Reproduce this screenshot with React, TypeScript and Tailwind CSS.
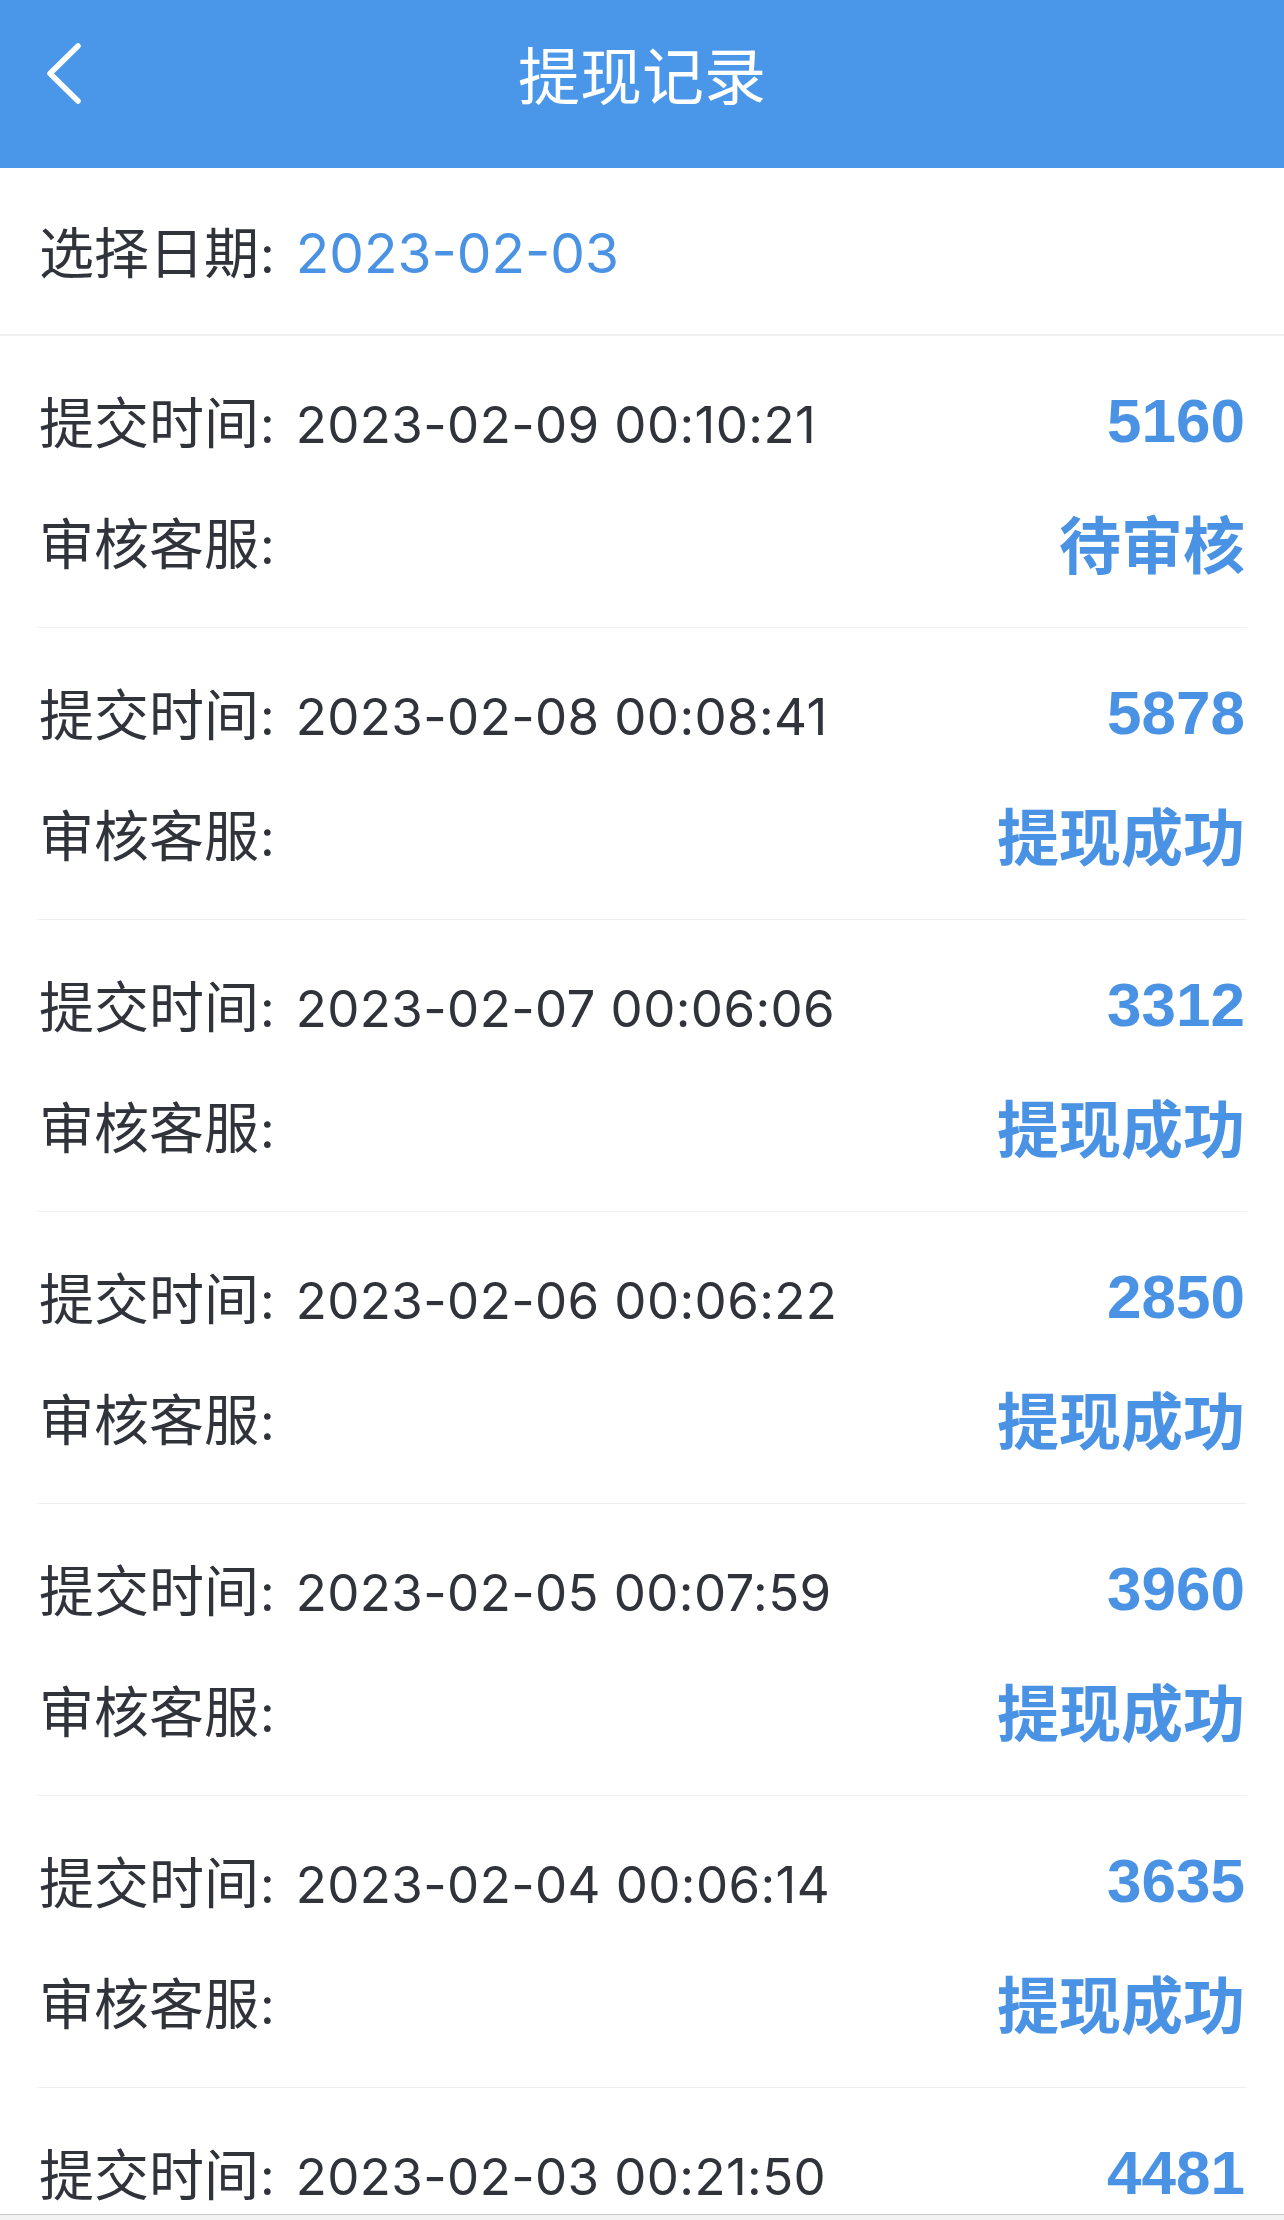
import React from "react"

type Record = {
  time: string
  amount: string
  status: string
}

const RECORDS: Record[] = [
  { time: "2023-02-09 00:10:21", amount: "5160", status: "待审核" },
  { time: "2023-02-08 00:08:41", amount: "5878", status: "提现成功" },
  { time: "2023-02-07 00:06:06", amount: "3312", status: "提现成功" },
  { time: "2023-02-06 00:06:22", amount: "2850", status: "提现成功" },
  { time: "2023-02-05 00:07:59", amount: "3960", status: "提现成功" },
  { time: "2023-02-04 00:06:14", amount: "3635", status: "提现成功" },
  { time: "2023-02-03 00:21:50", amount: "4481", status: "提现成功" },
]

const cjk = "font-['Noto_Sans_CJK_SC',sans-serif]"
const latin = "font-['Inter','Noto_Sans_CJK_SC',sans-serif]"

function Label({ text }: { text: string }) {
  return (
    <>
      <span className={`${cjk} text-[55px] leading-none text-[#30333a]`}>{text}</span>
      <span className={`${latin} ml-[1px] text-[51px] leading-none text-[#30333a]`}>:</span>
    </>
  )
}

function RecordRow({ item }: { item: Record }) {
  return (
    <div className="mx-[37px] flex flex-col gap-[41px] border-b border-[#efefef] px-[2px] pt-[45px] pb-[45px]">
      <div className="flex h-[80px] items-center justify-between">
        <div className="flex items-baseline">
          <Label text="提交时间" />
          <span className={`${latin} ml-[21px] text-[51px] leading-none tracking-[0.4px] text-[#30333a]`}>
            {item.time}
          </span>
        </div>
        <span className="font-['Liberation_Sans',sans-serif] text-[62px] font-bold leading-none text-[#4a92e4]">
          {item.amount}
        </span>
      </div>
      <div className="flex h-[80px] items-center justify-between">
        <div className="flex items-baseline">
          <Label text="审核客服" />
        </div>
        <span className={`${cjk} text-[62px] font-bold leading-none text-[#4a92e4]`}>
          {item.status}
        </span>
      </div>
    </div>
  )
}

export default function App() {
  return (
    <div className="flex h-[2220px] w-full flex-col overflow-hidden bg-white">
      <header className="h-[168px] shrink-0 bg-[#4a97ea]">
        <div className="grid h-[146px] grid-cols-[1fr_auto_1fr] items-center">
          <div className="pl-[44px]">
            <svg width="40" height="64" viewBox="0 0 40 64" fill="none">
              <path
                d="M34 5 L6 32.5 L34 60"
                stroke="white"
                strokeWidth="5.5"
                strokeLinecap="round"
                strokeLinejoin="round"
              />
            </svg>
          </div>
          <h1 className={`${cjk} text-[62px] font-normal leading-none text-white`}>提现记录</h1>
          <div />
        </div>
      </header>

      <div className="flex h-[168px] shrink-0 items-center border-b-2 border-[#efefef] px-[39px]">
        <div className="flex items-baseline">
          <Label text="选择日期" />
          <span className={`${latin} ml-[21px] text-[55px] leading-none text-[#4a92e4]`}>
            2023-02-03
          </span>
        </div>
      </div>

      <main className="min-h-0 flex-1 overflow-hidden">
        {RECORDS.map((item) => (
          <RecordRow key={item.time} item={item} />
        ))}
      </main>

      <div className="h-[6px] shrink-0 border-t border-[#c9c9c9] bg-[#f3f3f3]" />
    </div>
  )
}
